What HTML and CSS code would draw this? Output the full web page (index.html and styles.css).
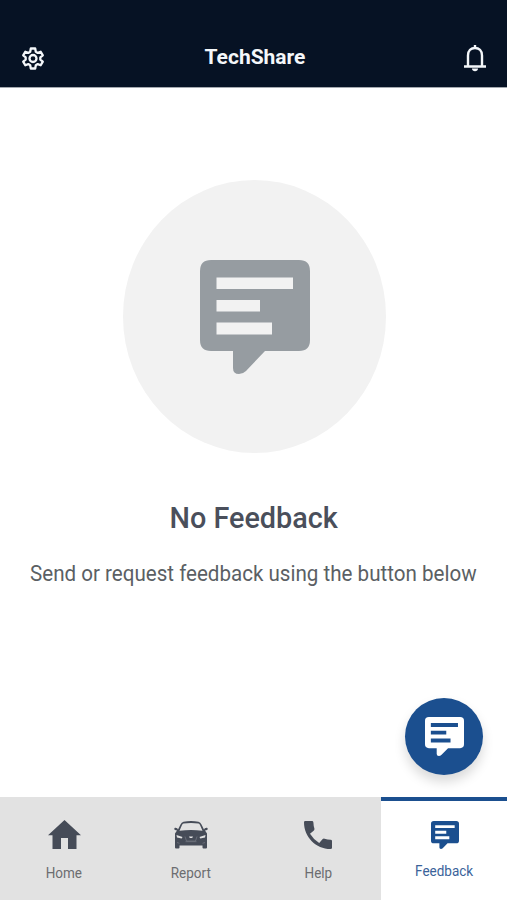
FILE: index.html
```
<!DOCTYPE html>
<html lang="en">
<head>
    <meta charset="UTF-8">
    <meta name="viewport" content="width=device-width, initial-scale=1.0">
    <title>TechShare</title>
    <link rel="stylesheet" href="styles.css">
</head>
<body>
    <svg class="sprite" aria-hidden="true">
        <symbol id="icon-feedback" viewBox="0 0 110 114" preserveAspectRatio="none">
            <path fill="currentColor" fill-rule="evenodd" d="M11 0H99Q110 0 110 11V80Q110 91 99 91H65L46 111Q43 114 39 114Q33 114 33 108V91H11Q0 91 0 80V11Q0 0 11 0ZM16.500 17.500V29H93V17.500ZM16.500 40V51.500H60V40ZM16.500 62.500V74.500H72V62.500Z"/>
        </symbol>
    </svg>

    <div class="app">
        <header class="app-header">
            <button class="icon-btn" aria-label="Settings">
                <svg class="icon-settings" viewBox="0 0 24 24">
                    <path d="M9.800 2h4.400l.6 3.300 1.900 1.100 3-1.200 2.100 3.700-2.500 2v2.200l2.500 2-2.100 3.700-3-1.200-1.900 1.100-.6 3.300H9.800l-.6-3.300-1.900-1.100-3 1.200-2.100-3.700 2.500-2v-2.200l-2.500-2 2.100-3.700 3 1.200 1.900-1.100z"/>
                    <circle cx="12" cy="12" r="3.500"/>
                </svg>
            </button>
            <h1 class="app-title"><span>TechShare</span></h1>
            <button class="icon-btn" aria-label="Notifications">
                <svg class="icon-bell" viewBox="0 0 24 28">
                    <path d="M5 22V11.500C5 6.500 8 4 12 4s7 2.500 7 7.500V22"/>
                    <path d="M1 22.500h22M12 1v3"/>
                    <path class="solid" d="M9 24.500h6c0 1.800-1.300 2.800-3 2.800s-3-1-3-2.800z"/>
                </svg>
            </button>
        </header>

        <main class="empty-state">
            <div class="empty-circle">
                <svg class="empty-icon"><use href="#icon-feedback"/></svg>
            </div>
            <h2 class="empty-title"><span>No Feedback</span></h2>
            <p class="empty-text"><span>Send or request feedback using the button below</span></p>
            <button class="fab" aria-label="New feedback">
                <svg><use href="#icon-feedback"/></svg>
            </button>
        </main>

        <nav class="tab-bar">
            <a class="tab">
                <svg class="icon-home" viewBox="0 0 33 29"><path fill="currentColor" d="M16.500 0L33 15.300H28.500V29H20V18H13V29H4.500V15.300H0z"/></svg>
                <span>Home</span>
            </a>
            <a class="tab">
                <svg class="icon-car" viewBox="0 0 34 28">
                    <path fill="currentColor" fill-rule="evenodd" d="M9.500.7Q17-.7 24.500.7Q26.500 1.200 27.500 3.500L30 8.500Q30.500 6.500 33 6.800Q34.500 8 33 9L31 9.500L33 12.500V26.500Q33 27.500 32 27.500H29.500Q28.500 27.500 28.500 26.500V24.500H5.500V26.500Q5.500 27.500 4.500 27.500H2Q1 27.500 1 26.500V12.500L3 9.500L1 9Q-.5 8 1 6.800Q3.500 6.500 4 8.500L6.500 3.500Q7.500 1.200 9.500.7ZM9.500 2.500Q8.500 2.800 8 4L5.500 9.700Q17 8.500 28.500 9.700L26 4Q25.500 2.800 24.500 2.500Q17 1.500 9.500 2.500Z"/>
                    <path class="car-light" d="M2.500 14l6 1.900-.8 1.700-4.700-1zM31.500 14l-6 1.900.8 1.700 4.700-1zM15 15.600h4l-.8 1.300h-2.400z"/>
                    <path class="car-grille" d="M11 15.500l1.500 4.500h9l1.500-4.500M11.500 20.700h11M3 21.500l2.500.8M31 21.500l-2.500.8"/>
                </svg>
                <span>Report</span>
            </a>
            <a class="tab">
                <svg class="icon-phone" viewBox="0 0 28 28"><path fill="currentColor" d="M1.200 0H8Q9.300 0 9.400 1.400Q9.500 4.800 10.400 7.500Q10.700 8.600 9.900 9.400L6 12.800Q9.500 18.600 15.200 22L18.700 18.100Q19.500 17.300 20.600 17.700Q23.500 18.600 26.600 18.700Q28 18.800 28 20V26.700Q28 28 26.500 28C12 28 0 16 0 1.200Q0 0 1.200 0Z"/></svg>
                <span>Help</span>
            </a>
            <a class="tab active">
                <svg class="icon-feedback"><use href="#icon-feedback"/></svg>
                <span>Feedback</span>
            </a>
        </nav>
    </div>
</body>
</html>
```
FILE: styles.css
```
* { margin: 0; padding: 0; box-sizing: border-box; }

body {
    background: #fff;
    font-family: Roboto, "Liberation Sans", sans-serif;
}

button {
    border: none;
    background: none;
    color: inherit;
    cursor: pointer;
}

svg { display: block; }

.sprite {
    position: absolute;
    width: 0;
    height: 0;
}

.app {
    display: flex;
    flex-direction: column;
    height: 900px;
}

.app-header {
    display: flex;
    align-items: center;
    justify-content: space-between;
    height: 88px;
    padding: 29px 20px 0 21px;
    background: #061224;
    border-bottom: 1px solid #a3a8af;
    color: #f4f7fa;
}

.app-title {
    font-size: 21px;
    line-height: 24px;
    font-weight: 700;
    margin: -2px 0 0 2px;
}

.app-title span,
.empty-title span,
.empty-text span {
    display: inline-block;
    white-space: nowrap;
}

.icon-settings {
    width: 24px;
    height: 25px;
    fill: none;
    stroke: currentColor;
    stroke-width: 2.3;
    stroke-linejoin: round;
}

.icon-bell {
    width: 24px;
    height: 28px;
    fill: none;
    stroke: currentColor;
    stroke-width: 2.4;
}

.icon-bell .solid {
    fill: currentColor;
    stroke: none;
}

.empty-state {
    position: relative;
    flex: 1;
    display: flex;
    flex-direction: column;
    align-items: center;
    padding-top: 92px;
}

.empty-circle {
    width: 263px;
    height: 273px;
    border-radius: 50%;
    background: #f2f2f2;
    padding: 79.500px 0 0 77px;
    margin-left: 2px;
}

.empty-icon {
    width: 110px;
    height: 114px;
    color: #969ca1;
}

.empty-title {
    margin-top: 47px;
    font-size: 30px;
    line-height: 36px;
    font-weight: 500;
    color: #4a4f5b;
}

.empty-title span { transform: scaleX(0.96); }

.empty-text {
    margin-top: 25px;
    font-size: 21.500px;
    line-height: 26px;
    color: #5b5f64;
}

.empty-text span { transform: scaleX(0.957); }

.fab {
    position: absolute;
    right: 24px;
    bottom: 22px;
    display: flex;
    align-items: center;
    justify-content: center;
    width: 78px;
    height: 77px;
    border-radius: 50%;
    background: #1b4f8f;
    color: #fff;
    box-shadow: 0 7px 12px rgba(0, 0, 0, 0.15);
}

.fab svg {
    width: 39px;
    height: 39px;
}

.tab-bar {
    display: grid;
    grid-template-columns: repeat(3, 127px) 1fr;
    height: 103px;
}

.tab {
    display: flex;
    flex-direction: column;
    align-items: center;
    padding: 23px 0 0 1px;
    background: #e2e2e2;
    color: #464c58;
    font-size: 14px;
    line-height: 18px;
}

.tab span {
    margin-top: auto;
    margin-bottom: 18px;
    color: #6c6d70;
    transform: scaleX(0.965);
}

.tab.active {
    background: #fff;
    border-top: 4px solid #1b4f8f;
    padding-top: 20px;
    color: #1b4f8f;
}

.tab.active span {
    margin-bottom: 20px;
    color: #3a639a;
}

.icon-home {
    width: 33px;
    height: 29px;
}

.icon-car {
    width: 34px;
    height: 28px;
    margin-top: 1px;
}

.car-light { fill: #e2e2e2; }

.car-grille {
    fill: none;
    stroke: #7d828c;
    stroke-width: 0.6;
}

.icon-phone {
    width: 28px;
    height: 28px;
    margin-top: 1px;
}

.icon-feedback {
    width: 28px;
    height: 28px;
}
```
